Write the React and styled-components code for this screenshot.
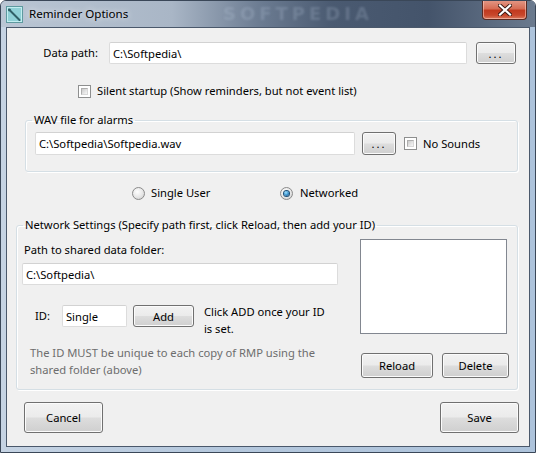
import React from 'react';
import styled, { createGlobalStyle } from 'styled-components';

const GlobalStyle = createGlobalStyle`
  html, body { margin: 0; padding: 0; }
  body {
    width: 536px;
    height: 453px;
    overflow: hidden;
    font-family: "Noto Sans", "Open Sans", sans-serif;
    font-size: 11.2px;
    color: #000;
  }
  * { box-sizing: border-box; }
`;

const Window = styled.div`
  position: relative;
  width: 536px;
  height: 453px;
  display: flex;
  flex-direction: column;
  border: 1px solid #3a4758;
  border-radius: 6px 6px 0 0;
  overflow: hidden;
  background: linear-gradient(90deg, #c5d3e3 0%, #b5c8dd 40%, #adc3db 100%);
`;

const TitleBar = styled.div`
  position: relative;
  height: 26px;
  display: flex;
  align-items: flex-start;
  padding-left: 5px;
  background: linear-gradient(90deg, #bac6d4 0%, #a9b6c6 32%, #6d7d93 48%, #4a5a71 62%, #44546b 80%, #6b7a8e 100%);
`;

const TitleIcon = styled.svg`
  margin-top: 5px;
  flex: none;
`;

const Title = styled.span`
  margin-top: 5px;
  margin-left: 6px;
  font-size: 11.6px;
  line-height: 16px;
  color: #000;
  text-shadow: 0 0 6px rgba(255, 255, 255, 0.9);
`;

const TitleWatermark = styled.span`
  position: absolute;
  left: 222px;
  top: 2px;
  font-family: "DejaVu Sans", sans-serif;
  font-weight: bold;
  font-size: 18px;
  line-height: 22px;
  letter-spacing: 4px;
  color: rgba(200, 215, 235, 0.2);
  filter: blur(0.8px);
  pointer-events: none;
`;

const CloseButton = styled.div`
  margin-left: auto;
  margin-right: 8px;
  margin-top: -1px;
  width: 45px;
  height: 20px;
  display: flex;
  align-items: center;
  justify-content: center;
  border: 1px solid #5a2a22;
  border-top: none;
  border-radius: 0 0 4px 4px;
  background: linear-gradient(180deg, #e49a88 0%, #d66d55 45%, #c23a1f 55%, #c8472b 80%, #db7a5e 100%);
  box-shadow: inset 0 0 0 1px rgba(255, 220, 210, 0.5);
`;

const Client = styled.div`
  position: relative;
  flex: 1;
  margin: 0 5px 5px 5px;
  border: 1px solid #4a586b;
  background: #f0f0f0;
  display: flex;
  flex-direction: column;
`;

const Row = styled.div`
  display: flex;
  align-items: center;
  margin-top: ${p => p.$top || 0}px;
  padding-left: ${p => p.$left || 0}px;
`;

const Label = styled.span`
  width: ${p => (p.$width ? `${p.$width}px` : 'auto')};
  text-align: ${p => p.$align || 'left'};
  line-height: 16px;
  white-space: nowrap;
  flex: none;
`;

const TextBox = styled.div`
  width: ${p => p.$w}px;
  height: ${p => p.$h || 22}px;
  background: #fff;
  border: 1px solid #dcdcdc;
  border-top-color: #d2d2d2;
  border-radius: 2px;
  padding-left: 3px;
  display: flex;
  align-items: center;
  white-space: nowrap;
  overflow: hidden;
  flex: none;
`;

const Button = styled.div`
  width: ${p => p.$w}px;
  height: ${p => p.$h || 22}px;
  flex: none;
  display: flex;
  align-items: center;
  justify-content: center;
  border: 1px solid #707070;
  border-radius: 3px;
  background: linear-gradient(180deg, #f2f2f2 0%, #ebebeb 48%, #dddddd 52%, #cfcfcf 100%);
  box-shadow: inset 0 0 0 1px #fbfbfb;
  letter-spacing: ${p => (p.$dots ? '2px' : '0')};
`;

const Check = styled.span`
  width: 13px;
  height: 13px;
  flex: none;
  border: 1px solid #8e8f8f;
  background: #fff;
  padding: 2px;
  display: inline-flex;
  &::after {
    content: '';
    flex: 1;
    background: linear-gradient(135deg, #cbcbcb 0%, #eaeaea 70%, #f6f6f6 100%);
    border: 1px solid;
    border-color: #aeaeae #d8d8d8 #d8d8d8 #aeaeae;
  }
`;

const Radio = styled.span`
  width: 13px;
  height: 13px;
  flex: none;
  border-radius: 50%;
  border: 1px solid #8a8a8a;
  background: radial-gradient(circle at 40% 35%, #ffffff 0%, #e6e6e6 55%, #c8c8c8 100%);
  display: inline-flex;
  align-items: center;
  justify-content: center;
  &::after {
    content: '';
    width: 5px;
    height: 5px;
    border-radius: 50%;
    background: ${p => (p.$checked
      ? 'radial-gradient(circle at 40% 35%, #9fe3ff 0%, #3a93cf 50%, #11406b 100%)'
      : 'transparent')};
    box-shadow: ${p => (p.$checked ? '0 0 0 1px #1d4f77' : 'none')};
  }
`;

const Group = styled.fieldset`
  margin: ${p => p.$top}px 0 0 ${p => p.$left}px;
  width: ${p => p.$w}px;
  height: ${p => p.$h}px;
  padding: 0;
  min-width: 0;
  border: 1px solid #d5dfe5;
  border-radius: 3px;
  box-shadow: inset 1px 1px 0 #fff, 1px 1px 0 #fff;
`;

const Legend = styled.legend`
  margin-left: ${p => p.$indent}px;
  padding: 0 2px;
  line-height: 16px;
`;

const NetBody = styled.div`
  display: flex;
  padding-left: 5px;
`;

const LeftCol = styled.div`
  width: 338px;
  display: flex;
  flex-direction: column;
`;

const RightCol = styled.div`
  display: flex;
  flex-direction: column;
`;

const ListBox = styled.div`
  width: 147px;
  height: 95px;
  margin-top: 6px;
  background: #fff;
  border: 1px solid #828790;
`;

const ButtonPair = styled.div`
  display: flex;
  gap: 9px;
  margin-top: 19px;
  margin-left: 1px;
`;

const Note = styled.div`
  line-height: 17px;
  width: 128px;
`;

const Muted = styled.div`
  color: #6d6d6d;
  line-height: 17px;
  margin-top: 7px;
  padding-left: 8px;
  width: 320px;
`;

const Footer = styled.div`
  display: flex;
  justify-content: space-between;
  padding: 0 10px 0 17px;
  margin-top: 12px;
`;

export default function App() {
  return (
    <>
      <GlobalStyle />
      <Window>
        <TitleBar>
          <TitleIcon width="17" height="17" viewBox="0 0 17 17">
            <rect x="0.5" y="0.5" width="16" height="16" fill="#8fd0d6" stroke="#5e9aa0" />
            <rect x="1.5" y="1.5" width="14" height="14" fill="none" stroke="#c2eef0" />
            <path d="M3 3.5 L13.5 14" stroke="#2f5f66" strokeWidth="2" strokeLinecap="round" />
            <path d="M2.5 5 L4.5 3" stroke="#2f5f66" strokeWidth="1.5" />
          </TitleIcon>
          <Title>Reminder Options</Title>
          <TitleWatermark>SOFTPEDIA</TitleWatermark>
          <CloseButton>
            <svg width="14" height="12" viewBox="0 0 14 12">
              <path d="M2 1.5 L12 10.5 M12 1.5 L2 10.5" stroke="#3a1a14" strokeWidth="4" strokeLinecap="square" />
              <path d="M2 1.5 L12 10.5 M12 1.5 L2 10.5" stroke="#ffffff" strokeWidth="2.2" strokeLinecap="square" />
            </svg>
          </CloseButton>
        </TitleBar>

        <Client>
          <Row $top={14}>
            <Label $width={91} $align="right">Data path:</Label>
            <TextBox $w={358} style={{ marginLeft: 11 }}>C:\Softpedia\</TextBox>
            <Button $w={40} $dots style={{ marginLeft: 9 }}>...</Button>
          </Row>

          <Row $top={19} $left={71}>
            <Check />
            <Label style={{ marginLeft: 6 }}>Silent startup (Show reminders, but not event list)</Label>
          </Row>

          <Group $top={13} $left={18} $w={493} $h={60}>
            <Legend $indent={6}>WAV file for alarms</Legend>
            <Row $top={4} $left={9}>
              <TextBox $w={320} $h={23}>C:\Softpedia\Softpedia.wav</TextBox>
              <Button $w={34} $h={23} $dots style={{ marginLeft: 7 }}>...</Button>
              <Check style={{ marginLeft: 8 }} />
              <Label style={{ marginLeft: 6 }}>No Sounds</Label>
            </Row>
          </Group>

          <Row $top={13} $left={125}>
            <Radio />
            <Label $width={64} style={{ marginLeft: 6 }}>Single User</Label>
            <Radio $checked style={{ marginLeft: 65 }} />
            <Label style={{ marginLeft: 7 }}>Networked</Label>
          </Row>

          <Group $top={16} $left={9} $w={502} $h={173}>
            <Legend $indent={6}>Network Settings (Specify path first, click Reload, then add your ID)</Legend>
            <NetBody>
              <LeftCol>
                <Label style={{ marginTop: 9, paddingLeft: 2 }}>Path to shared data folder:</Label>
                <TextBox $w={316} style={{ marginTop: 5 }}>C:\Softpedia\</TextBox>
                <Row $top={20} $left={13} style={{ alignItems: 'flex-start' }}>
                  <Label style={{ marginTop: 3 }}>ID:</Label>
                  <TextBox $w={65} style={{ marginLeft: 12 }}>Single</TextBox>
                  <Button $w={61} style={{ marginLeft: 6 }}>Add</Button>
                  <Note style={{ marginLeft: 10, marginTop: -2 }}>Click ADD once your ID is set.</Note>
                </Row>
                <Muted>The ID MUST be unique to each copy of RMP using the shared folder (above)</Muted>
              </LeftCol>
              <RightCol>
                <ListBox />
                <ButtonPair>
                  <Button $w={72} $h={25}>Reload</Button>
                  <Button $w={67} $h={25}>Delete</Button>
                </ButtonPair>
              </RightCol>
            </NetBody>
          </Group>

          <Footer>
            <Button $w={79} $h={31}>Cancel</Button>
            <Button $w={79} $h={31}>Save</Button>
          </Footer>
        </Client>
      </Window>
    </>
  );
}
